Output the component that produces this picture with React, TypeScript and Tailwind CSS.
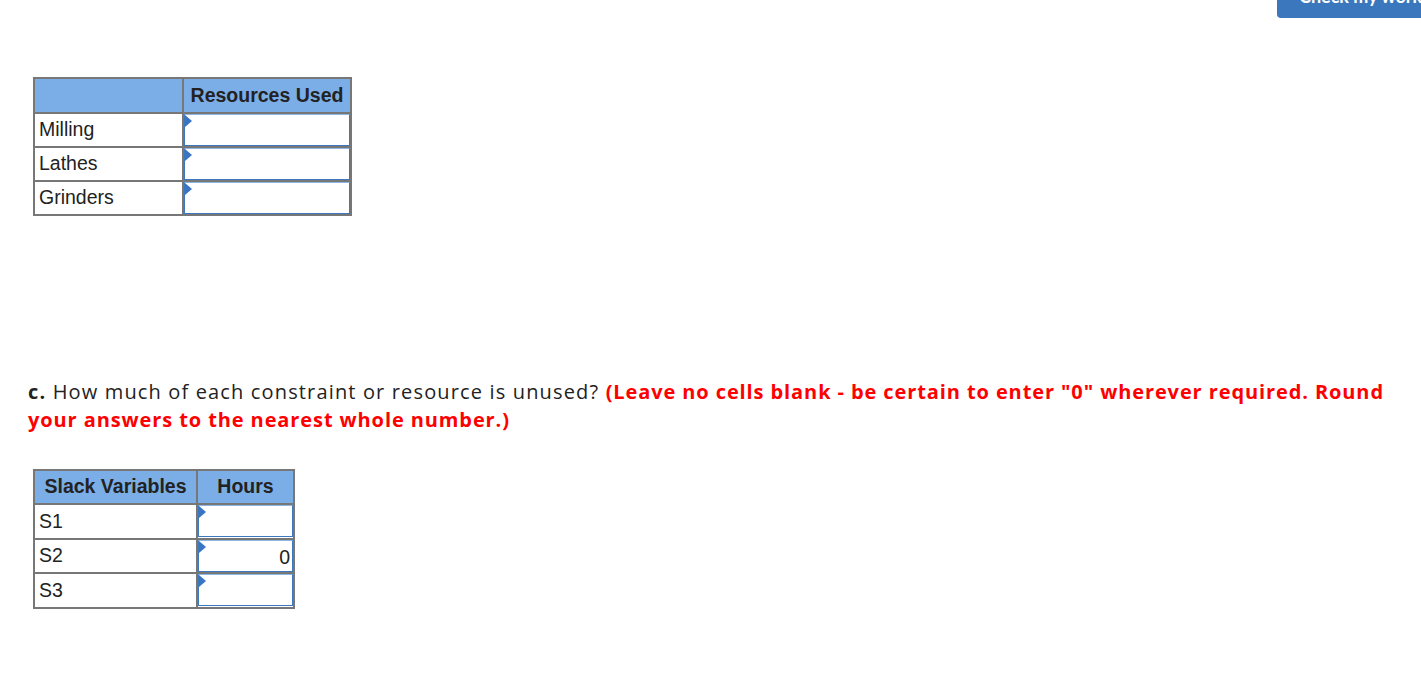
import React from 'react';

const cellText = "font-['Liberation_Sans',Arial,sans-serif] text-[19.5px] text-[#222]";

function AnswerBox({ value }: { value?: string }) {
  return <div className="relative h-[32px] border border-[#3b78be] border-t-[#8fb6e2] bg-white">
      <span className="absolute left-0 top-0 h-0 w-0 border-y-[6px] border-l-[7px] border-y-transparent border-l-[#3a75c4]" />
      {value && <span className={`absolute right-[2px] top-[2px] ${cellText}`}>{value}</span>}
    </div>;
}

function ResourcesTable() {
  const rows = ['Milling', 'Lathes', 'Grinders'];
  return <table className="border-collapse">
      <thead>
        <tr className="bg-[#7baee6]">
          <th className="w-[149px] h-[35px] border-2 border-[#777]"></th>
          <th className={`w-[168px] h-[35px] border-2 border-[#777] px-[4px] font-bold ${cellText}`}>Resources Used</th>
        </tr>
      </thead>
      <tbody>
        {rows.map(r => <tr key={r}>
            <td className={`h-[33.5px] border-2 border-[#777] px-[4px] py-0 text-left ${cellText}`}>{r}</td>
            <td className="h-[33.5px] border-2 border-[#777] p-0 align-middle"><AnswerBox /></td>
          </tr>)}
      </tbody>
    </table>;
}

function SlackTable() {
  const rows = [{ k: 'S1', v: '' }, { k: 'S2', v: '0' }, { k: 'S3', v: '' }];
  return <table className="border-collapse">
      <thead>
        <tr className="bg-[#7baee6]">
          <th className={`w-[163px] h-[34px] border-2 border-[#777] px-[4px] font-bold ${cellText}`}>Slack Variables</th>
          <th className={`w-[97px] h-[34px] border-2 border-[#777] px-[4px] font-bold ${cellText}`}>Hours</th>
        </tr>
      </thead>
      <tbody>
        {rows.map(r => <tr key={r.k}>
            <td className={`h-[34.5px] border-2 border-[#777] px-[4px] py-0 text-left ${cellText}`}>{r.k}</td>
            <td className="h-[34.5px] border-2 border-[#777] p-0 align-middle"><AnswerBox value={r.v} /></td>
          </tr>)}
      </tbody>
    </table>;
}

export default function App() {
  return <div className="relative min-h-[693px] overflow-hidden bg-white">
      <button className="absolute right-[-20px] top-[-26px] h-[44px] w-[164px] rounded-[4px] bg-[#3a77bd] pl-[22px] text-left font-['Lato',sans-serif] text-[18px] font-bold text-white">
        Check my work
      </button>

      <div className="pl-[33px] pt-[77px]">
        <ResourcesTable />
      </div>

      <p className="ml-[28px] mt-[162px] mr-[30px] font-['Open_Sans',sans-serif] text-[20px] leading-[28px] tracking-[1.15px] text-[#222]">
        <span className="font-bold">c.</span> How much of each constraint or resource is unused?{' '}
        <span className="font-bold tracking-[0.9px] text-[#f00]">(Leave no cells blank - be certain to enter "0" wherever required. Round your answers to the nearest whole number.)</span>
      </p>

      <div className="pl-[33px] pt-[35px]">
        <SlackTable />
      </div>
    </div>;
}
